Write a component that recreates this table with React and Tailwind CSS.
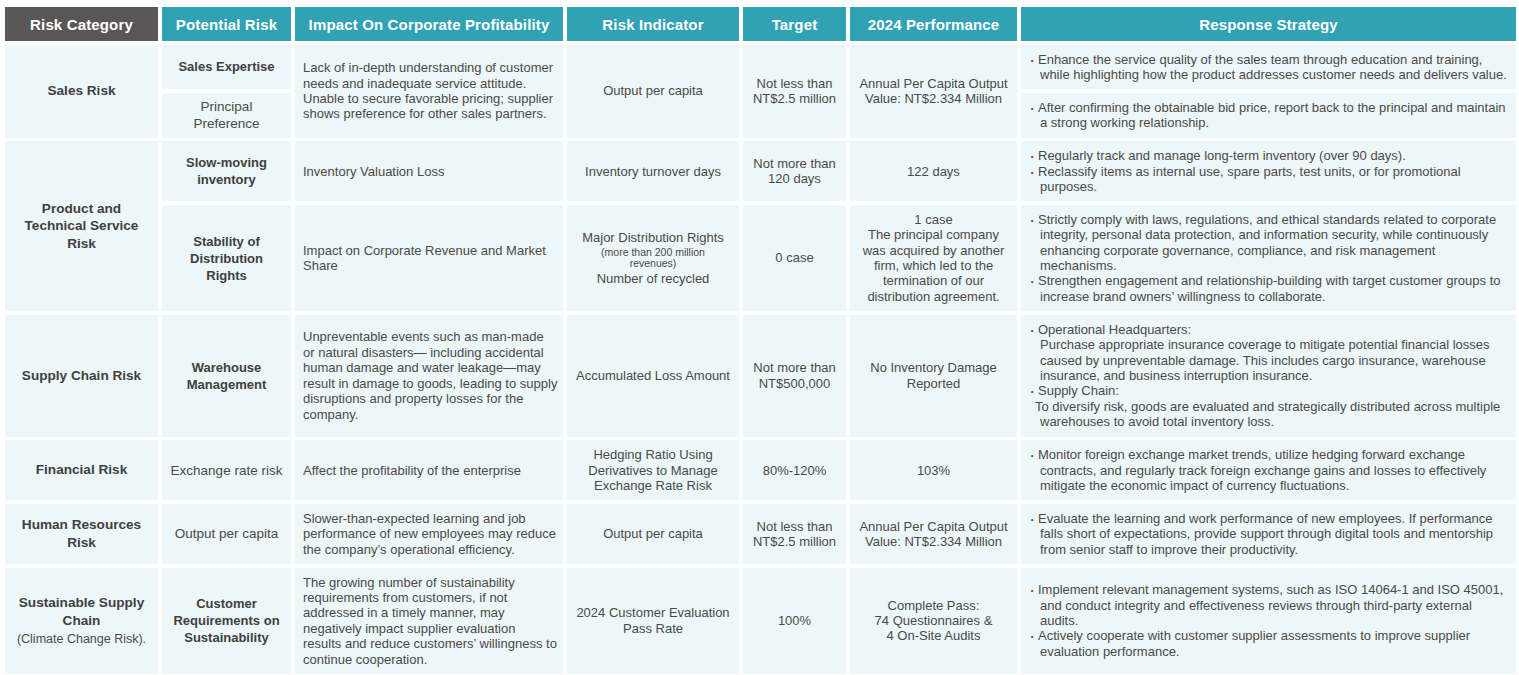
import React from "react";

const base = "bg-[#edf6f8] text-[13px] leading-[15.4px] text-[#4a4a4a] py-[7px] flex flex-col justify-center";
const center = base + " items-center text-center px-[6px]";
const left = base + " px-[8px]";

function Lines({ lines }) {
  return lines.map((l, i) => (
    <div key={i} className="whitespace-nowrap">{l}</div>
  ));
}

function Cat({ lines, sub, span }) {
  return (
    <div className={center + " !py-0 font-bold !text-[13.6px] !leading-[17.5px] text-[#404040] " + (span ? "row-span-2" : "")}>
      <Lines lines={lines} />
      {sub && <div className="font-normal text-[12.5px] leading-[15px] mt-[3px] text-[#4a4a4a]">{sub}</div>}
    </div>
  );
}

function Pot({ lines, bold }) {
  return (
    <div className={center + " !py-0 !leading-[17px]" + (bold ? " font-bold text-[#404040]" : " !text-[13.5px]")}>
      <Lines lines={lines} />
    </div>
  );
}

function C({ lines, span, children }) {
  return (
    <div className={center + (span ? " row-span-2" : "")}>
      {children || <Lines lines={lines} />}
    </div>
  );
}

function L({ lines, span }) {
  return (
    <div className={left + (span ? " row-span-2" : "")}>
      <Lines lines={lines} />
    </div>
  );
}

const Bullet = () => (
  <span className="inline-block w-[8px]">
    <span className="inline-block scale-[0.6] origin-[40%_55%]">{"\u2022"}</span>
  </span>
);

function R({ items }) {
  return (
    <div className={base + " pl-[9px] pr-[8px]"}>
      {items.map((it, i) => (
        <div key={i}>
          {it.map((l, j) => {
            if (j === 0)
              return (
                <div key={j} className="whitespace-nowrap">
                  <Bullet />
                  {l}
                </div>
              );
            if (typeof l === "object") return <div key={j} className="whitespace-nowrap pl-[5px]">{l.t}</div>;
            return <div key={j} className="whitespace-nowrap pl-[10px]">{l}</div>;
          })}
        </div>
      ))}
    </div>
  );
}

const H = ({ children, dark }) => (
  <div
    className={
      "h-[34px] flex items-center justify-center text-white font-bold text-[15px] tracking-[0.15px] pt-[2px] " +
      (dark ? "bg-[#5a5657]" : "bg-[#31a2b4]")
    }
  >
    {children}
  </div>
);

export default function App() {
  return (
    <div className="w-[1519px] h-[675px] bg-white overflow-hidden font-['Liberation_Sans',Arial,sans-serif]">
      <div className="pt-[7px] pl-[5px] grid grid-cols-[153px_129px_268px_172px_103px_167px_495px] gap-x-[4px] gap-y-[3.5px]">
        <H dark>Risk Category</H>
        <H>Potential Risk</H>
        <H>Impact On Corporate Profitability</H>
        <H>Risk Indicator</H>
        <H>Target</H>
        <H>2024 Performance</H>
        <H>Response Strategy</H>

        {/* Sales Risk */}
        <Cat lines={["Sales Risk"]} span />
        <Pot bold lines={["Sales Expertise"]} />
        <L
          span
          lines={[
            "Lack of in-depth understanding of customer",
            "needs and inadequate service attitude.",
            "Unable to secure favorable pricing; supplier",
            "shows preference for other sales partners.",
          ]}
        />
        <C span lines={["Output per capita"]} />
        <C span lines={["Not less than", "NT$2.5 million"]} />
        <C span lines={["Annual Per Capita Output", "Value: NT$2.334 Million"]} />
        <R
          items={[
            [
              "Enhance the service quality of the sales team through education and training,",
              "while highlighting how the product addresses customer needs and delivers value.",
            ],
          ]}
        />
        <Pot lines={["Principal", "Preference"]} />
        <R
          items={[
            [
              "After confirming the obtainable bid price, report back to the principal and maintain",
              "a strong working relationship.",
            ],
          ]}
        />

        {/* Product and Technical Service Risk */}
        <Cat lines={["Product and", "Technical Service", "Risk"]} span />
        <Pot bold lines={["Slow-moving", "inventory"]} />
        <L lines={["Inventory Valuation Loss"]} />
        <C lines={["Inventory turnover days"]} />
        <C lines={["Not more than", "120 days"]} />
        <C lines={["122 days"]} />
        <R
          items={[
            ["Regularly track and manage long-term inventory (over 90 days)."],
            ["Reclassify items as internal use, spare parts, test units, or for promotional", "purposes."],
          ]}
        />
        <Pot bold lines={["Stability of", "Distribution", "Rights"]} />
        <L lines={["Impact on Corporate Revenue and Market", "Share"]} />
        <C>
          <div className="whitespace-nowrap">Major Distribution Rights</div>
          <div className="text-[10.5px] leading-[11px] mt-[1px]">(more than 200 million</div>
          <div className="text-[10.5px] leading-[11px] mb-[2px]">revenues)</div>
          <div className="whitespace-nowrap">Number of recycled</div>
        </C>
        <C lines={["0 case"]} />
        <C
          lines={[
            "1 case",
            "The principal company",
            "was acquired by another",
            "firm, which led to the",
            "termination of our",
            "distribution agreement.",
          ]}
        />
        <R
          items={[
            [
              "Strictly comply with laws, regulations, and ethical standards related to corporate",
              "integrity, personal data protection, and information security, while continuously",
              "enhancing corporate governance, compliance, and risk management",
              "mechanisms.",
            ],
            [
              "Strengthen engagement and relationship-building with target customer groups to",
              "increase brand owners\u2019 willingness to collaborate.",
            ],
          ]}
        />

        {/* Supply Chain Risk */}
        <Cat lines={["Supply Chain Risk"]} />
        <Pot bold lines={["Warehouse", "Management"]} />
        <L
          lines={[
            "Unpreventable events such as man-made",
            "or natural disasters\u2014 including accidental",
            "human damage and water leakage\u2014may",
            "result in damage to goods, leading to supply",
            "disruptions and property losses for the",
            "company.",
          ]}
        />
        <C lines={["Accumulated Loss Amount"]} />
        <C lines={["Not more than", "NT$500,000"]} />
        <C lines={["No Inventory Damage", "Reported"]} />
        <R
          items={[
            [
              "Operational Headquarters:",
              "Purchase appropriate insurance coverage to mitigate potential financial losses",
              "caused by unpreventable damage. This includes cargo insurance, warehouse",
              "insurance, and business interruption insurance.",
            ],
            [
              "Supply Chain:",
              { t: "To diversify risk, goods are evaluated and strategically distributed across multiple" },
              "warehouses to avoid total inventory loss.",
            ],
          ]}
        />

        {/* Financial Risk */}
        <Cat lines={["Financial Risk"]} />
        <Pot lines={["Exchange rate risk"]} />
        <L lines={["Affect the profitability of the enterprise"]} />
        <C lines={["Hedging Ratio Using", "Derivatives to Manage", "Exchange Rate Risk"]} />
        <C lines={["80%-120%"]} />
        <C lines={["103%"]} />
        <R
          items={[
            [
              "Monitor foreign exchange market trends, utilize hedging forward exchange",
              "contracts, and regularly track foreign exchange gains and losses to effectively",
              "mitigate the economic impact of currency fluctuations.",
            ],
          ]}
        />

        {/* Human Resources Risk */}
        <Cat lines={["Human Resources", "Risk"]} />
        <Pot lines={["Output per capita"]} />
        <L
          lines={[
            "Slower-than-expected learning and job",
            "performance of new employees may reduce",
            "the company\u2019s operational efficiency.",
          ]}
        />
        <C lines={["Output per capita"]} />
        <C lines={["Not less than", "NT$2.5 million"]} />
        <C lines={["Annual Per Capita Output", "Value: NT$2.334 Million"]} />
        <R
          items={[
            [
              "Evaluate the learning and work performance of new employees. If performance",
              "falls short of expectations, provide support through digital tools and mentorship",
              "from senior staff to improve their productivity.",
            ],
          ]}
        />

        {/* Sustainable Supply Chain */}
        <Cat lines={["Sustainable Supply", "Chain"]} sub="(Climate Change Risk)." />
        <Pot bold lines={["Customer", "Requirements on", "Sustainability"]} />
        <L
          lines={[
            "The growing number of sustainability",
            "requirements from customers, if not",
            "addressed in a timely manner, may",
            "negatively impact supplier evaluation",
            "results and reduce customers\u2019 willingness to",
            "continue cooperation.",
          ]}
        />
        <C lines={["2024 Customer Evaluation", "Pass Rate"]} />
        <C lines={["100%"]} />
        <C lines={["Complete Pass:", "74 Questionnaires &", "4 On-Site Audits"]} />
        <R
          items={[
            [
              "Implement relevant management systems, such as ISO 14064-1 and ISO 45001,",
              "and conduct integrity and effectiveness reviews through third-party external",
              "audits.",
            ],
            [
              "Actively cooperate with customer supplier assessments to improve supplier",
              "evaluation performance.",
            ],
          ]}
        />
      </div>
    </div>
  );
}
